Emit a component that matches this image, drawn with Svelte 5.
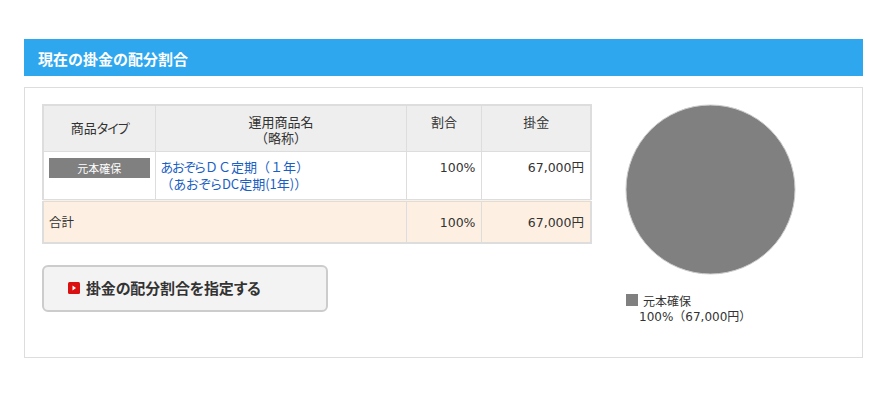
<script lang="ts">
  const rate = '100%';
  const amount = '67,000円';
</script>

<div class="page">
  <h2 class="title">現在の掛金の配分割合</h2>
  <div class="panel">
    <div class="left">
      <table class="alloc">
        <colgroup>
          <col class="c1" />
          <col />
          <col class="c3" />
          <col class="c4" />
        </colgroup>
        <thead>
          <tr>
            <th class="mid">商品<span class="kana tight">タイプ</span></th>
            <th>運用商品名<br />（略称）</th>
            <th>割合</th>
            <th>掛金</th>
          </tr>
        </thead>
        <tbody>
          <tr class="item">
            <td><span class="tag">元本確保</span></td>
            <td>
              <a href="#top"><span class="kana tight">あおぞら</span>ＤＣ定期（１年）<br />（<span class="kana">あおぞら</span>DC定期(1年)）</a>
            </td>
            <td class="num rate">{rate}</td>
            <td class="num">{amount}</td>
          </tr>
          <tr class="total">
            <td colspan="2">合計</td>
            <td class="num rate">{rate}</td>
            <td class="num">{amount}</td>
          </tr>
        </tbody>
      </table>
      <button class="action" type="button">
        <svg width="12" height="12" viewBox="0 0 12 12" aria-hidden="true">
          <rect width="12" height="12" rx="1.5" fill="#d9100f" />
          <path d="M4.5 3.5 L8 6 L4.5 8.5 Z" fill="#fff" />
        </svg>
        <span class="kana label">掛金の配分割合を指定する</span>
      </button>
    </div>
    <div class="chart">
      <svg class="pie" width="172" height="172" viewBox="0 0 172 172" aria-hidden="true">
        <circle cx="85.5" cy="85.5" r="84.5" fill="#808080" stroke="#ccc" stroke-width="1" />
      </svg>
      <div class="legend">
        <div class="legend-name"><span class="swatch"></span>元本確保</div>
        <div class="legend-value">{rate}（{amount}）</div>
      </div>
    </div>
  </div>
</div>

<style>
  :global(body) {
    margin: 0;
    background: #fff;
  }
  .page {
    padding: 39px 13px 0 24px;
    font-family: "DejaVu Sans", "Noto Sans CJK JP", sans-serif;
    font-size: 12.5px;
    color: #333;
  }
  .title {
    margin: 0 0 11px;
    height: 37px;
    line-height: 39px;
    padding-left: 14px;
    background: #2ea7ef;
    color: #fff;
    font-family: "Noto Sans CJK JP", sans-serif;
    font-size: 15px;
    font-weight: 700;
  }
  .panel {
    display: flex;
    height: 271px;
    box-sizing: border-box;
    border: 1px solid #ddd;
    padding: 16px 0 0 17px;
  }
  .left {
    width: 550px;
  }
  .kana {
    font-feature-settings: "palt";
  }
  .tight {
    letter-spacing: -1px;
  }
  .label {
    letter-spacing: -0.15px;
  }
  .alloc {
    width: 550px;
    table-layout: fixed;
    border-collapse: collapse;
    border: 2px solid #ddd;
  }
  .c1 {
    width: 112px;
  }
  .c3 {
    width: 75px;
  }
  .c4 {
    width: 110px;
  }
  .alloc th,
  .alloc td {
    border: 1px solid #ddd;
    padding: 0 6px 0 5px;
    font-size: 12.5px;
    line-height: 16px;
    font-weight: 400;
  }
  .alloc th {
    height: 46px;
    padding: 8px 5px 0 6px;
    box-sizing: border-box;
    background: #eee;
    text-align: center;
    vertical-align: top;
    color: #333;
    font-family: "Noto Sans CJK JP", sans-serif;
    font-size: 13px;
  }
  .alloc th.mid {
    padding-top: 0;
    vertical-align: middle;
  }
  .item td {
    height: 49px;
    padding-top: 7px;
    box-sizing: border-box;
    vertical-align: top;
    border-bottom: 3px double #ddd;
  }
  .item td:first-child {
    padding-right: 5px;
  }
  .item td.num {
    padding-top: 8px;
  }
  .tag {
    display: block;
    height: 20px;
    margin-top: -1px;
    line-height: 20px;
    background: #808080;
    color: #fff;
    text-align: center;
    font-family: "Noto Sans CJK JP", sans-serif;
    font-size: 11px;
  }
  a {
    color: #1a5fc4;
    text-decoration: none;
    font-family: "Noto Sans CJK JP", sans-serif;
    font-size: 13px;
    line-height: 16px;
  }
  .alloc .num {
    text-align: right;
  }
  .alloc .rate {
    padding-right: 5px;
  }
  .total td {
    height: 43px;
    padding-top: 2px;
    box-sizing: border-box;
    background: #fdf0e2;
    vertical-align: middle;
  }
  .action {
    display: flex;
    align-items: center;
    gap: 6px;
    width: 286px;
    height: 47px;
    margin-top: 21px;
    padding: 0 0 2px 24px;
    box-sizing: border-box;
    border: 2px solid #ccc;
    border-radius: 6px;
    background: #f3f3f3;
    color: #333;
    font-family: "Noto Sans CJK JP", sans-serif;
    font-size: 15px;
    font-weight: 700;
  }
  .chart {
    margin-left: 33px;
  }
  .pie {
    display: block;
  }
  .legend {
    margin-top: 17px;
    margin-left: 1px;
    font-size: 12px;
    line-height: 16px;
  }
  .legend-name {
    display: flex;
    align-items: center;
    font-family: "Noto Sans CJK JP", sans-serif;
  }
  .swatch {
    width: 12px;
    height: 12px;
    margin-right: 5px;
    margin-top: -2px;
    background: #808080;
  }
  .legend-value {
    padding-left: 13px;
  }
</style>
